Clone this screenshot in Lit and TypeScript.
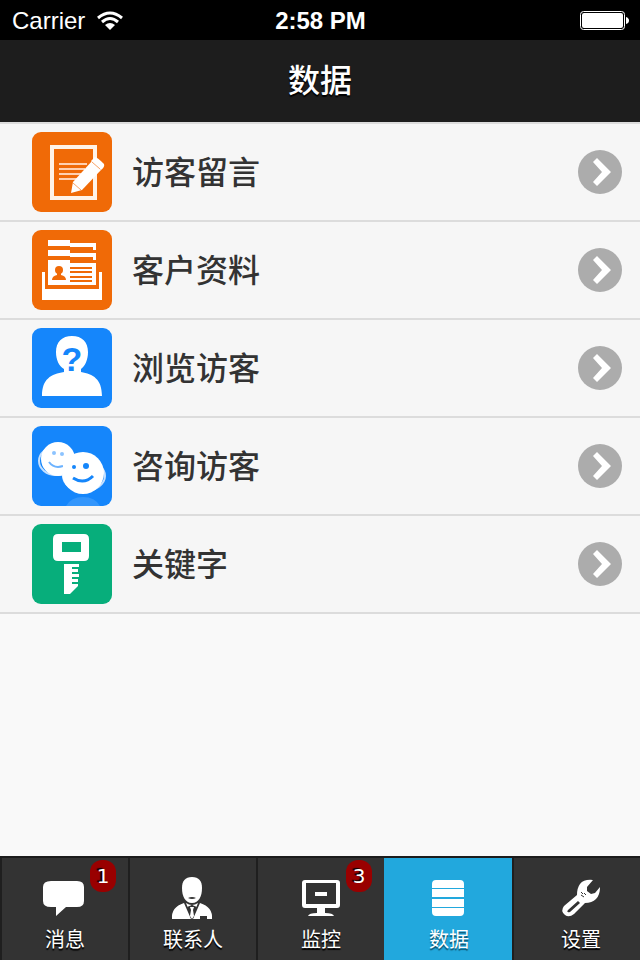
import { LitElement, html, svg, css, nothing } from "lit";
import { customElement, property, state } from "lit/decorators.js";
import { classMap } from "lit/directives/class-map.js";

const rowIcons = {
  note: svg`
    <rect x="20" y="15" width="43" height="51" fill="none" stroke="#fff3e8" stroke-width="4"/>
    <path d="M27 32H55M27 37H53M27 42H49M27 47H46" stroke="#ffd0b0" stroke-width="2"/>
    <path d="M39 61L41 50L60 29L69 38L50 58Z" fill="#fff"/>
    <path d="M59 29L63 25Q65 25 72 32Q73 35 69 38Z" fill="#fff"/>
    <path d="M41 51L49 58M60 30L68 37" stroke="#f8a368" stroke-width="1"/>`,
  folder: svg`
    <path d="M16 10H38V13H64V20H61V17H38V16H16Z" fill="#fff"/>
    <path d="M16 20H38V23H64V30H61V27H38V26H16Z" fill="#fff"/>
    <path d="M16 30H38V33H64V55H16Z" fill="#fff"/>
    <path d="M10 42H13V59H67V42H70V70H10Z" fill="#fff"/>
    <circle cx="27" cy="40" r="4" fill="#f06a07"/>
    <path d="M25 42H29V45Q34 46 34 50H20Q20 46 25 45Z" fill="#f06a07"/>
    <path d="M38 38H60M38 42H60M38 47H60M38 51H60" stroke="#f06a07" stroke-width="2"/>`,
  unknown: svg`
    <path d="M40 8C50 8 56 14 56 24C56 32 53 38 49 41V44C61 46 70 51 70 68H10C10 51 19 46 32 44V41C27 38 24 32 24 24C24 14 30 8 40 8Z" fill="#fff"/>
    <text x="40" y="43" class="mark">?</text>`,
  faces: svg`
    <ellipse cx="24" cy="35" rx="17" ry="14" fill="none" stroke="#c4e0ff" stroke-width="2"/>
    <circle cx="26" cy="33" r="17" fill="#fff"/>
    <circle cx="22" cy="27" r="2" fill="#8cc3ff"/><circle cx="30" cy="28" r="2" fill="#8cc3ff"/>
    <path d="M17 36Q22 43 31 40" fill="none" stroke="#6db3ff" stroke-width="2"/>
    <ellipse cx="52" cy="50" rx="21" ry="15" fill="#1586fb" stroke="#c4e0ff" stroke-width="2"/>
    <circle cx="51" cy="47" r="21" fill="#fff"/>
    <circle cx="42" cy="41" r="2" fill="#1586fb"/><circle cx="54" cy="40" r="3" fill="#1586fb"/>
    <path d="M41 52Q52 59 61 50" fill="none" stroke="#1586fb" stroke-width="3"/>
    <path d="M34 80Q39 71 51 71T68 80Z" fill="#3496fb"/>`,
  key: svg`
    <path fill-rule="evenodd" d="M26 10H52Q57 10 57 15V32Q57 37 52 37H26Q21 37 21 32V15Q21 10 26 10ZM30 18V28H49V18Z" fill="#fff"/>
    <path d="M32 40H47V43H40V45H46V48H40V50H47V53H40V55H46V58H40V60H46V62L38 70H32Z" fill="#fff"/>`,
};

const tabIcons = {
  chat: svg`<path d="M8 5H34Q41 5 41 11V25Q41 31 34 31H23L13 40V31H8Q0 31 0 25V11Q0 5 8 5Z" fill="#fff"/>`,
  person: svg`
    <path d="M21 1C28 1 31 5 31 12C31 20 28 27 21 27S11 20 11 12C11 5 14 1 21 1Z" fill="#fff"/>
    <path d="M17 22Q21 20 25 22Q21 24 17 22Z" fill="#333"/>
    <path d="M13 27L20 43H1Q0 31 13 27ZM29 27Q42 31 41 43H22Z" fill="#fff"/>
    <path d="M15 27L17 32L21 29L25 32L27 27Q21 31 15 27Z" fill="#fff"/>
    <path d="M16 31L20 42H22L26 31L21 29Z" fill="#333"/>
    <path d="M19 31H23L22 34L23 40L21 43L19 40L20 34Z" fill="#fff"/>
    <path d="M29 40H36V43H29Z" fill="#333"/>`,
  monitor: svg`
    <path fill-rule="evenodd" d="M6 4H38Q41 4 41 7V29Q41 32 38 32H26V37Q34 37 35 40H9Q10 37 18 37V32H6Q3 32 3 29V7Q3 4 6 4ZM7 7V28H37V7Z" fill="#fff"/>
    <path d="M16 16H28V20H16Z" fill="#fff"/>`,
  data: svg`
    <path d="M9 4H33Q37 4 37 8V12H5V8Q5 4 9 4ZM5 13H37V21H5ZM5 23H37V31H5ZM5 32H37V36Q37 40 33 40H9Q5 40 5 36Z" fill="#fff"/>`,
  wrench: svg`
    <path fill-rule="evenodd" d="M34 4L28 11L28 15L32 18L36 17L41 11Q41 19 37 23Q33 27 26 27L15 38Q10 42 6 39Q1 35 5 30L18 19Q18 12 21 8Q25 3 34 4ZM19 25L9 34Q7 37 11 36L21 27Z" fill="#fff"/>
    <path d="M22 16L24 18M25 17L27 19M22 19L25 21" stroke="#333" stroke-width="1"/>`,
};

interface Row { label: string; icon: keyof typeof rowIcons; tone: "orange" | "blue" | "green"; }
interface Tab { label: string; icon: keyof typeof tabIcons; badge?: number; }

const rows: Row[] = [
  { label: "访客留言", icon: "note", tone: "orange" },
  { label: "客户资料", icon: "folder", tone: "orange" },
  { label: "浏览访客", icon: "unknown", tone: "blue" },
  { label: "咨询访客", icon: "faces", tone: "blue" },
  { label: "关键字", icon: "key", tone: "green" },
];

const tabs: Tab[] = [
  { label: "消息", icon: "chat", badge: 1 },
  { label: "联系人", icon: "person" },
  { label: "监控", icon: "monitor", badge: 3 },
  { label: "数据", icon: "data" },
  { label: "设置", icon: "wrench" },
];

@customElement("status-bar")
class StatusBar extends LitElement {
  static styles = css`
    :host {
      display: grid;
      grid-template-columns: 1fr auto 1fr;
      align-items: center;
      padding: 0 11px 0 12px;
      background: #000;
      color: #fff;
      font: 24px/38px "Liberation Sans", sans-serif;
    }
    .carrier { display: flex; align-items: center; gap: 12px; }
    .carrier, .time { padding-top: 2px; }
    .time { font-weight: bold; }
    .battery { justify-self: end; }
    svg { display: block; }
  `;
  render() {
    return html`
      <div class="carrier">
        <span>Carrier</span>
        <svg width="26" height="20" viewBox="0 0 26 20" aria-hidden="true">
          <path d="M1 7Q13 -3 25 7M5 11Q13 4 21 11" fill="none" stroke="#fff" stroke-width="3"/>
          <path d="M8 14Q13 10 18 14L13 19Z" fill="#fff"/>
        </svg>
      </div>
      <time class="time">2:58 PM</time>
      <svg class="battery" width="49" height="20" viewBox="0 0 49 20" aria-hidden="true">
        <rect x="0.5" y="1.5" width="44" height="18" rx="3" fill="none" stroke="#fff"/>
        <rect x="2" y="3" width="41" height="15" rx="2" fill="#fff"/>
        <path d="M46 7Q49 8 49 10.5T46 14Z" fill="#fff"/>
      </svg>
    `;
  }
}

@customElement("menu-row")
class MenuRow extends LitElement {
  @property({ attribute: false }) row!: Row;
  static styles = css`
    :host { display: block; }
    .row {
      display: flex;
      align-items: center;
      gap: 20px;
      padding: 8px 18px 8px 32px;
      background: #f6f6f6;
      border-bottom: 2px solid #dcdcdc;
      color: #333;
      text-decoration: none;
    }
    .tile { display: block; flex: none; border-radius: 9px; }
    .orange { background: #f06a07; }
    .blue { background: #1586fb; }
    .green { background: #07ae7b; }
    .label { flex: 1; padding-top: 2px; font-size: 32px; font-weight: 500; line-height: 48px; }
    .arrow { display: block; flex: none; }
    .mark {
      fill: #1586fb;
      font: bold 34px "Liberation Sans", sans-serif;
      text-anchor: middle;
    }
  `;
  render() {
    const { label, icon, tone } = this.row;
    return html`
      <a class="row" href="#">
        <svg class=${classMap({ tile: true, [tone]: true })} width="80" height="80" viewBox="0 0 80 80" aria-hidden="true">${rowIcons[icon]}</svg>
        <span class="label">${label}</span>
        <svg class="arrow" width="44" height="44" viewBox="0 0 44 44" aria-hidden="true">
          <circle cx="22" cy="22" r="22" fill="#acacac"/>
          <path d="M15 12L19 8L33 22L19 36L15 32L24 22Z" fill="#fff"/>
        </svg>
      </a>
    `;
  }
}

@customElement("tab-bar")
class TabBar extends LitElement {
  @state() private active = 3;
  static styles = css`
    :host {
      display: grid;
      grid-template-columns: repeat(5, 1fr);
      border-top: 2px solid #1c1c1c;
      background: #333;
    }
    .tab {
      position: relative;
      display: flex;
      flex-direction: column;
      align-items: center;
      gap: 8px;
      margin: 0;
      padding: 18px 0 8px;
      border: 0;
      border-left: 2px solid #1f1f1f;
      background: #333;
      color: #fff;
      font: inherit;
      font-size: 20px;
      line-height: 24px;
      text-shadow: 0 2px 1px #000;
      cursor: pointer;
    }
    .tab:last-child { padding-left: 8px; }
    .active { background: #22a8dd; border-left-color: #22a8dd; text-shadow: 0 2px 1px #11546e; }
    .icon { display: block; }
    .badge {
      position: absolute;
      top: 2px;
      right: 12px;
      width: 26px;
      border-radius: 12px;
      background: #900;
      font: 20px/32px "DejaVu Sans", sans-serif;
      text-align: center;
      text-shadow: -2px -1px 1px #000;
    }
  `;
  render() {
    return tabs.map((tab, i) => html`
      <button
        type="button"
        class=${classMap({ tab: true, active: i === this.active })}
        aria-current=${i === this.active ? "page" : "false"}
        @click=${() => (this.active = i)}
      >
        <svg class="icon" width="44" height="44" viewBox="0 0 44 44" aria-hidden="true">${tabIcons[tab.icon]}</svg>
        <span>${tab.label}</span>
        ${tab.badge ? html`<span class="badge">${tab.badge}</span>` : nothing}
      </button>
    `);
  }
}

@customElement("app-root")
class AppRoot extends LitElement {
  static styles = css`
    :host {
      display: flex;
      flex-direction: column;
      min-height: 100vh;
      background: #f9f9f9;
      font-family: "Liberation Sans", "Noto Sans CJK SC", sans-serif;
    }
    .header {
      padding: 17px 0;
      background: #1d1d1d;
      color: #fff;
      text-align: center;
    }
    .title {
      margin: 0;
      font-size: 32px;
      font-weight: 500;
      line-height: 48px;
      text-shadow: 0 2px 1px #000;
    }
    .list { flex: 1; border-top: 2px solid #dcdcdc; }
  `;
  render() {
    return html`
      <status-bar></status-bar>
      <header class="header"><h1 class="title">数据</h1></header>
      <main class="list">${rows.map((row) => html`<menu-row .row=${row}></menu-row>`)}</main>
      <tab-bar></tab-bar>
    `;
  }
}
